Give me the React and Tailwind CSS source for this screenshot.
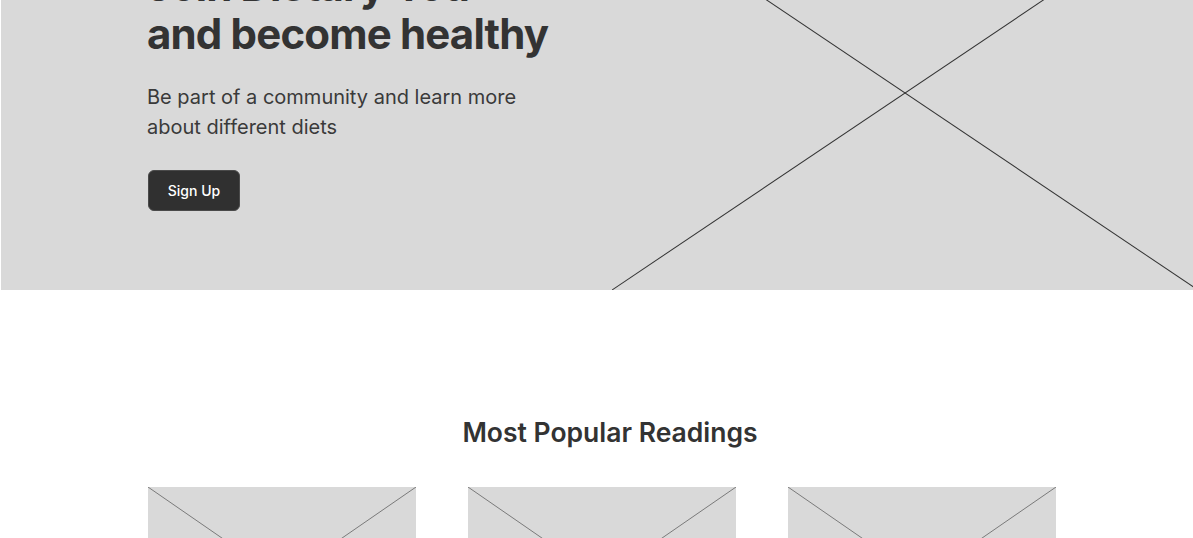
import React from 'react';

function Placeholder({ className }) {
  return (
    <div className={`relative bg-[#d9d9d9] ${className}`}>
      <svg className="absolute inset-0 h-full w-full" viewBox="0 0 100 100" preserveAspectRatio="none">
        <line x1="0" y1="0" x2="100" y2="100" stroke="currentColor" strokeWidth="1" vectorEffect="non-scaling-stroke" />
        <line x1="100" y1="0" x2="0" y2="100" stroke="currentColor" strokeWidth="1" vectorEffect="non-scaling-stroke" />
      </svg>
    </div>
  );
}

const readings = [1, 2, 3];

function App() {
  return (
    <div className="h-[538px] overflow-hidden bg-white font-['Inter',sans-serif] text-[#333333]">
      <section className="-mt-[104px] ml-[1px] flex h-[394px] overflow-hidden bg-[#d9d9d9]">
        <div className="w-[611px] shrink-0 pl-[146px] pt-[66px]">
          <h1 className="text-[42px] font-bold leading-[48px] tracking-[-0.02em]">
            Join Dietary You
            <br />
            and become healthy
          </h1>
          <p className="mt-[24px] text-[20px] leading-[30px] text-[#3a3a3a]">
            Be part of a community and learn more
            <br />
            about different diets
          </p>
          <button className="mt-[28px] ml-[1px] h-[41px] w-[92px] rounded-[6px] border border-[#4a4a4a] bg-[#303030] text-[14px] font-medium text-white">
            Sign Up
          </button>
        </div>
        <Placeholder className="h-[394px] w-[586px] shrink-0 text-[#333333]" />
      </section>

      <section className="pt-[126px]">
        <h2 className="pl-[27px] text-center text-[26.5px] font-semibold leading-[32px]">Most Popular Readings</h2>
        <div className="mt-[39px] flex gap-[52px] pl-[148px]">
          {readings.map((r) => (
            <Placeholder key={r} className="h-[185px] w-[268px] text-[#7a7a7a]" />
          ))}
        </div>
      </section>
    </div>
  );
}

export default App;
